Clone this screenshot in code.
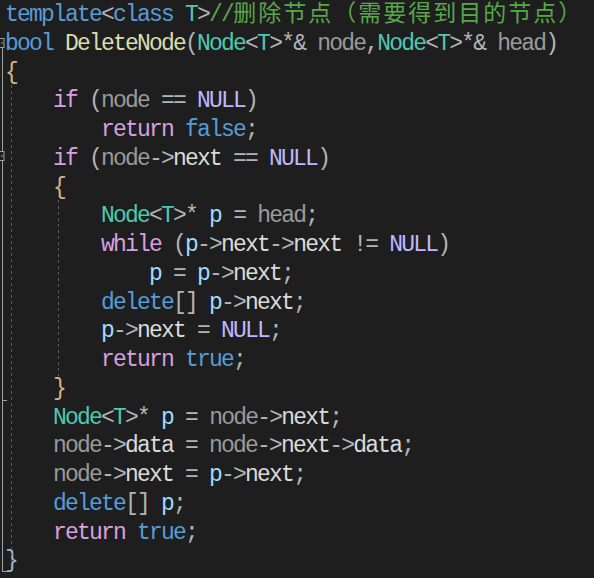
import React from "react";

type Tok = [string, string];

const C = {
  kw: "text-[#569cd6]",
  ctl: "text-[#d8a0df]",
  ty: "text-[#4ec9b0]",
  fn: "text-[#dcdcaa]",
  prm: "text-[#9a9a9a]",
  loc: "text-[#9cdcfe]",
  mem: "text-[#dadada]",
  mac: "text-[#beb7ff]",
  op: "text-[#b4b4b4]",
  cm: "text-[#57a64a]",
  br: "text-[#d4b483]",
  br2: "text-[#9fb3cf]",
};

const nodeT: Tok[] = [
  ["Node", C.ty],
  ["<", C.op],
  ["T", C.ty],
  [">", C.op],
];

const lines: Tok[][] = [
  [
    ["template", C.kw],
    ["<", C.op],
    ["class", C.kw],
    [" ", C.op],
    ["T", C.ty],
    [">", C.op],
    ["//", C.cm],
    ["删除节点（需要得到目的节点）", C.cm + " cjk"],
  ],
  [
    ["bool", C.kw],
    [" ", C.op],
    ["DeleteNode", C.fn],
    ["(", C.op],
    ...nodeT,
    ["*& ", C.op],
    ["node", C.prm],
    [",", C.op],
    ...nodeT,
    ["*& ", C.op],
    ["head", C.prm],
    [")", C.op],
  ],
  [["{", C.br]],
  [
    ["    ", C.op],
    ["if", C.ctl],
    [" (", C.op],
    ["node", C.prm],
    [" == ", C.op],
    ["NULL", C.mac],
    [")", C.op],
  ],
  [
    ["        ", C.op],
    ["return", C.ctl],
    [" ", C.op],
    ["false", C.kw],
    [";", C.op],
  ],
  [
    ["    ", C.op],
    ["if", C.ctl],
    [" (", C.op],
    ["node", C.prm],
    ["->", C.op],
    ["next", C.mem],
    [" == ", C.op],
    ["NULL", C.mac],
    [")", C.op],
  ],
  [
    ["    ", C.op],
    ["{", C.br],
  ],
  [
    ["        ", C.op],
    ...nodeT,
    ["* ", C.op],
    ["p", C.loc],
    [" = ", C.op],
    ["head", C.prm],
    [";", C.op],
  ],
  [
    ["        ", C.op],
    ["while", C.ctl],
    [" (", C.op],
    ["p", C.loc],
    ["->", C.op],
    ["next", C.mem],
    ["->", C.op],
    ["next", C.mem],
    [" != ", C.op],
    ["NULL", C.mac],
    [")", C.op],
  ],
  [
    ["            ", C.op],
    ["p", C.loc],
    [" = ", C.op],
    ["p", C.loc],
    ["->", C.op],
    ["next", C.mem],
    [";", C.op],
  ],
  [
    ["        ", C.op],
    ["delete", C.kw],
    ["[] ", C.op],
    ["p", C.loc],
    ["->", C.op],
    ["next", C.mem],
    [";", C.op],
  ],
  [
    ["        ", C.op],
    ["p", C.loc],
    ["->", C.op],
    ["next", C.mem],
    [" = ", C.op],
    ["NULL", C.mac],
    [";", C.op],
  ],
  [
    ["        ", C.op],
    ["return", C.ctl],
    [" ", C.op],
    ["true", C.kw],
    [";", C.op],
  ],
  [
    ["    ", C.op],
    ["}", C.br],
  ],
  [
    ["    ", C.op],
    ...nodeT,
    ["* ", C.op],
    ["p", C.loc],
    [" = ", C.op],
    ["node", C.prm],
    ["->", C.op],
    ["next", C.mem],
    [";", C.op],
  ],
  [
    ["    ", C.op],
    ["node", C.prm],
    ["->", C.op],
    ["data", C.mem],
    [" = ", C.op],
    ["node", C.prm],
    ["->", C.op],
    ["next", C.mem],
    ["->", C.op],
    ["data", C.mem],
    [";", C.op],
  ],
  [
    ["    ", C.op],
    ["node", C.prm],
    ["->", C.op],
    ["next", C.mem],
    [" = ", C.op],
    ["p", C.loc],
    ["->", C.op],
    ["next", C.mem],
    [";", C.op],
  ],
  [
    ["    ", C.op],
    ["delete", C.kw],
    ["[] ", C.op],
    ["p", C.loc],
    [";", C.op],
  ],
  [
    ["    ", C.op],
    ["return", C.ctl],
    [" ", C.op],
    ["true", C.kw],
    [";", C.op],
  ],
  [["}", C.br2]],
  [
    ["                 ", C.op],
    ["//测试节点删除是否正确", C.cm + " cjk"],
  ],
];

// gutter outlining + indent guides, drawn over the editor
const Guides = () => (
  <svg
    className="absolute inset-0 pointer-events-none"
    width={594}
    height={578}
    viewBox="0 0 594 578"
  >
    {/* outer function outline */}
    <rect x={-4} y={38.5} width={8} height={9} fill="#1e1e1e" stroke="#a0a0a0" strokeWidth={1} />
    <line x1={1} y1={43} x2={3} y2={43} stroke="#a0a0a0" />
    <line x1={2.5} y1={48} x2={2.5} y2={572} stroke="#a0a0a0" />
    <line x1={2} y1={571.5} x2={7} y2={571.5} stroke="#a0a0a0" />
    {/* inner if outline */}
    <rect x={-4} y={151.5} width={8} height={9} fill="#1e1e1e" stroke="#a0a0a0" strokeWidth={1} />
    <line x1={1} y1={156} x2={3} y2={156} stroke="#a0a0a0" />
    <line x1={2} y1={400.5} x2={7} y2={400.5} stroke="#a0a0a0" />
    {/* indent guides */}
    <line x1={11.5} y1={85} x2={11.5} y2={562} stroke="#5a5a5a" strokeDasharray="3 3" />
    <line x1={58.5} y1={200} x2={58.5} y2={376} stroke="#5a5a5a" strokeDasharray="3 3" />
  </svg>
);

export default function App() {
  return (
    <div className="relative w-[594px] h-[578px] overflow-hidden bg-[#1e1e1e]">
      <div className="pl-[5px] pt-[1px] font-['Liberation_Mono','Noto_Sans_CJK_SC',monospace] text-[23px] tracking-[-1.8px] leading-[28.75px] whitespace-pre">
        {lines.map((line, i) => (
          <div key={i} className={i === lines.length - 1 ? "h-[28.75px] mt-[2px]" : "h-[28.75px]"}>
            {line.map(([text, cls], j) =>
              cls.endsWith(" cjk") ? (
                <span key={j} className={cls.replace(" cjk", "") + " tracking-[2px]"}>
                  {text.startsWith("//") ? (
                    <>
                      <span className="tracking-[-1.8px]">//</span>
                      {text.slice(2)}
                    </>
                  ) : (
                    text
                  )}
                </span>
              ) : (
                <span key={j} className={cls}>
                  {text}
                </span>
              )
            )}
          </div>
        ))}
      </div>
      <Guides />
    </div>
  );
}
